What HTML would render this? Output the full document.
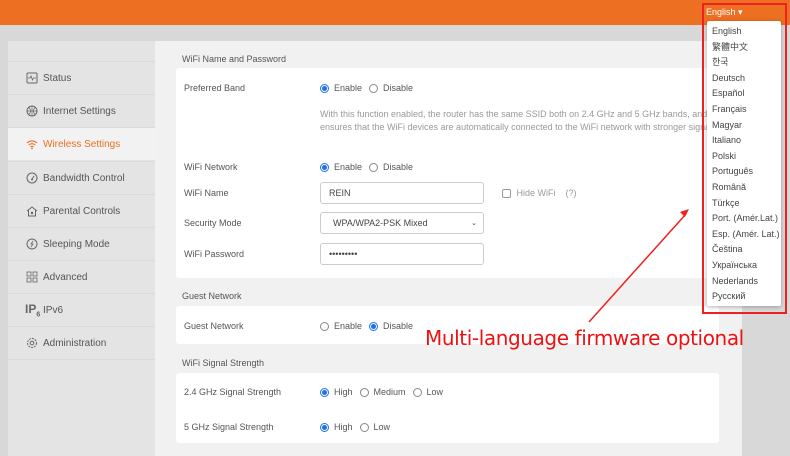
<!DOCTYPE html>
<html><head><meta charset="utf-8"><style>
*{margin:0;padding:0;box-sizing:border-box}
body{width:790px;height:456px;overflow:hidden;background:#d8d8d8;font-family:"Liberation Sans","Noto Sans CJK SC",sans-serif;font-size:9px;color:#555;position:relative}
.hdr{position:absolute;left:0;top:0;width:790px;height:25px;background:#ec6f22}
.side{position:absolute;left:8px;top:41px;width:147px;height:415px;background:#e4e4e4}
.item{position:absolute;left:0;width:147px;height:33px;border-top:1px solid #dadada;display:flex;align-items:center;padding-left:35px;font-size:10px;color:#555}
.item.act{background:#f2f2f2;color:#ec6f22;width:147px}
.ic{position:absolute;left:18px;top:10px;width:12px;height:12px}
.main{position:absolute;left:155px;top:41px;width:587px;height:415px;background:#f1f1f1}
.card{position:absolute;left:21px;width:543px;background:#fff;border-radius:3px}
.ttl{position:absolute;left:27px;font-size:9px;color:#555}
.lbl{position:absolute;left:8px;font-size:9px;color:#555}
.r{position:absolute;display:flex;align-items:center;font-size:9px;color:#555;gap:3px}
.rad{display:inline-block;width:9px;height:9px;border:1px solid #888;border-radius:50%;margin-right:2px;margin-left:4px}
.rad.on{border-color:#1a73e8;background:radial-gradient(circle,#1a73e8 2.2px,#fff 2.8px)}
.r .rad:first-child{margin-left:0}
.inp{position:absolute;left:144px;width:164px;height:22px;border:1px solid #ccc;border-radius:3px;padding-left:8px;display:flex;align-items:center;font-size:9px;color:#444}
.menu{position:absolute;left:707px;top:21px;width:74px;height:285px;background:#fff;box-shadow:0 1px 4px rgba(0,0,0,.3);border-radius:2px}
.menu div{height:15.6px;line-height:15.6px;padding-left:5px;font-size:9px;color:#444}
</style></head><body>
<div class="hdr"></div>
<div style="position:absolute;left:706px;top:7px;color:#fff;font-size:9px">English ▾</div>
<div class="side">
<div class="item" style="top:20px"><svg class="ic" viewBox="0 0 12 12"><rect x="1" y="1" width="10" height="10" rx="1" fill="none" stroke="#666"/><path d="M2 6h2l1-2 1.5 4 1-2H10" fill="none" stroke="#666" stroke-width=".8"/></svg>Status</div>
<div class="item" style="top:53px"><svg class="ic" viewBox="0 0 12 12"><circle cx="6" cy="6" r="5" fill="none" stroke="#666"/><path d="M1 6h10M6 1v10M3 2.5c2 2 2 5 0 7M9 2.5c-2 2-2 5 0 7" fill="none" stroke="#666" stroke-width=".7"/></svg>Internet Settings</div>
<div class="item act" style="top:86px"><svg class="ic" viewBox="0 0 12 12"><path d="M1 5a7 7 0 0 1 10 0M2.8 7a4.5 4.5 0 0 1 6.4 0M4.5 9a2 2 0 0 1 3 0" fill="none" stroke="#ec6f22" stroke-width="1.1"/><circle cx="6" cy="10.5" r=".9" fill="#ec6f22"/></svg>Wireless Settings</div>
<div class="item" style="top:120px"><svg class="ic" viewBox="0 0 12 12"><circle cx="6" cy="6" r="5" fill="none" stroke="#666"/><path d="M6 7l2-3" stroke="#666"/><circle cx="6" cy="7.5" r="1" fill="#666"/></svg>Bandwidth Control</div>
<div class="item" style="top:153px"><svg class="ic" viewBox="0 0 12 12"><path d="M1 6L6 2l5 4M2.5 5v6h7V5" fill="none" stroke="#666"/><circle cx="6" cy="8" r="1.2" fill="#666"/></svg>Parental Controls</div>
<div class="item" style="top:186px"><svg class="ic" viewBox="0 0 12 12"><circle cx="6" cy="6" r="5" fill="none" stroke="#666"/><path d="M7 3L5 6h2L5 9" fill="none" stroke="#666" stroke-width=".8"/></svg>Sleeping Mode</div>
<div class="item" style="top:219px"><svg class="ic" viewBox="0 0 12 12"><rect x="1" y="1" width="4" height="4" fill="none" stroke="#666" stroke-width=".8"/><rect x="7" y="1" width="4" height="4" fill="none" stroke="#666" stroke-width=".8"/><rect x="1" y="7" width="4" height="4" fill="none" stroke="#666" stroke-width=".8"/><rect x="7" y="7" width="4" height="4" fill="none" stroke="#666" stroke-width=".8"/></svg>Advanced</div>
<div class="item" style="top:252px"><span style="position:absolute;left:17px;top:8px;font-size:12px;color:#666;font-weight:bold">IP<sub style="font-size:7px">6</sub></span>IPv6</div>
<div class="item" style="top:285px"><svg class="ic" viewBox="0 0 12 12"><circle cx="6" cy="6" r="4.5" fill="none" stroke="#666" stroke-dasharray="2 1"/><circle cx="6" cy="6" r="1.8" fill="none" stroke="#666"/></svg>Administration</div>
<div class="item" style="top:318px;height:1px"></div>
</div>
<div class="main">
<div class="ttl" style="top:13px">WiFi Name and Password</div>
<div class="card" style="top:27px;height:210px">
<div class="lbl" style="top:15px">Preferred Band</div>
<div class="r" style="left:144px;top:15px"><span class="rad on"></span>Enable<span class="rad"></span>Disable</div>
<div style="position:absolute;left:144px;top:40px;width:400px;color:#999;font-size:9px;line-height:13px;white-space:nowrap">With this function enabled, the router has the same SSID both on 2.4 GHz and 5 GHz bands, and<br>ensures that the WiFi devices are automatically connected to the WiFi network with stronger signals</div>
<div class="lbl" style="top:94px">WiFi Network</div>
<div class="r" style="left:144px;top:94px"><span class="rad on"></span>Enable<span class="rad"></span>Disable</div>
<div class="lbl" style="top:120px">WiFi Name</div>
<div class="inp" style="top:114px">REIN</div>
<div class="r" style="left:326px;top:120px;color:#999"><span style="width:9px;height:9px;border:1px solid #999;border-radius:2px;display:inline-block"></span>&nbsp;Hide WiFi &nbsp;&nbsp; (?)</div>
<div class="lbl" style="top:150px">Security Mode</div>
<div class="inp" style="top:144px;padding-left:12px">WPA/WPA2-PSK Mixed<span style="position:absolute;right:6px;font-size:7px">⌄</span></div>
<div class="lbl" style="top:181px">WiFi Password</div>
<div class="inp" style="top:175px">•••••••••</div>
</div>
<div class="ttl" style="top:250px">Guest Network</div>
<div class="card" style="top:265px;height:38px">
<div class="lbl" style="top:15px">Guest Network</div>
<div class="r" style="left:144px;top:15px"><span class="rad"></span>Enable<span class="rad on"></span>Disable</div>
</div>
<div class="ttl" style="top:317px">WiFi Signal Strength</div>
<div class="card" style="top:332px;height:70px">
<div class="lbl" style="top:14px">2.4 GHz Signal Strength</div>
<div class="r" style="left:144px;top:14px"><span class="rad on"></span>High<span class="rad"></span>Medium<span class="rad"></span>Low</div>
<div class="lbl" style="top:49px">5 GHz Signal Strength</div>
<div class="r" style="left:144px;top:49px"><span class="rad on"></span>High<span class="rad"></span>Low</div>
</div>
</div>
<div class="menu" style="padding-top:3px">
<div>English</div><div>繁體中文</div><div>한국</div><div>Deutsch</div><div>Español</div><div>Français</div><div>Magyar</div><div>Italiano</div><div>Polski</div><div>Português</div><div>Română</div><div>Türkçe</div><div>Port. (Amér.Lat.)</div><div>Esp. (Amér. Lat.)</div><div>Čeština</div><div>Українська</div><div>Nederlands</div><div>Русский</div>
</div>
<div style="position:absolute;left:702px;top:3px;width:85px;height:311px;border:2px solid #f02020"></div>
<svg style="position:absolute;left:0;top:0" width="790" height="456"><line x1="589" y1="322" x2="686" y2="214" stroke="#f02020" stroke-width="1.5"/><path d="M689 209l-9 3 5 5z" fill="#f02020"/></svg>
<div style="position:absolute;left:425px;top:326px;color:#f01010;font-size:20px;font-family:'DejaVu Sans',sans-serif;letter-spacing:-.4px;white-space:nowrap">Multi-language firmware optional</div>
</body></html>
